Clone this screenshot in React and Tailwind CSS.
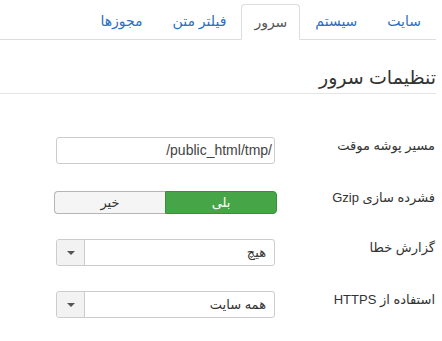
const tabs = [
  { label: "سایت" },
  { label: "سیستم" },
  { label: "سرور", active: true },
  { label: "فیلتر متن" },
  { label: "مجوزها" },
];

function Caret() {
  return (
    <svg width="8" height="4" viewBox="0 0 8 4" className="block">
      <path d="M0 0 H8 L4 4 Z" fill="#555" />
    </svg>
  );
}

function Select({ value }) {
  return (
    <div className="flex h-[27px] w-[219px] rounded-[3px] border border-[#ccc] bg-white">
      <div className="flex flex-1 items-center pr-[8px] text-[13px] text-[#333]">{value}</div>
      <div className="flex w-[28px] items-center justify-center border-r border-[#ccc] bg-[#f2f2f2] rounded-l-[3px]">
        <Caret />
      </div>
    </div>
  );
}

function Row({ label, className, children }) {
  return (
    <div className={`flex items-start ${className}`}>
      <div className="w-[161px] shrink-0 pr-[1px] text-[13px] leading-[18px] text-[#333]">{label}</div>
      <div>{children}</div>
    </div>
  );
}

export default function App() {
  return (
    <div
      dir="rtl"
      className="h-[341px] w-[442px] overflow-hidden bg-white pr-[6px]"
      style={{ fontFamily: '"Liberation Sans", "DejaVu Sans", sans-serif' }}
    >
      {/* تب ها */}
      <ul className="mt-[4px] flex h-[36px] border-b border-[#ddd]">
        {tabs.map((t) => (
          <li
            key={t.label}
            className={
              t.active
                ? "-mb-px flex h-[36px] items-center rounded-t-[4px] border border-b-white border-[#ddd] bg-white px-[12px] text-[14px] text-[#555]"
                : "flex h-[35px] items-center px-[15px] text-[14px] text-[#2a6fbf]"
            }
          >
            {t.label}
          </li>
        ))}
      </ul>

      {/* عنوان */}
      <h3 className="mt-[25px] border-b border-[#e5e5e5] pb-[3px] text-[19px] leading-[25px] text-[#333]">
        تنظیمات سرور
      </h3>

      <Row label="مسیر پوشه موقت" className="mt-[43px]">
        <div className="flex h-[27px] w-[219px] items-center rounded-[3px] border border-[#ccc] bg-white pr-[2px] text-[14px] text-[#444]">
          /public_html/tmp/
        </div>
      </Row>

      <Row label="فشرده سازی Gzip" className="mt-[25px]">
        <div className="mt-[2px] flex h-[23px] w-[223px] -mr-[2px]">
          <div className="flex w-[112px] items-center justify-center rounded-r-[4px] border border-[#3a8f3a] bg-[#46a546] text-[13px] text-white">
            بلی
          </div>
          <div className="flex flex-1 items-center justify-center rounded-l-[4px] border border-r-0 border-[#b5b5b5] bg-[#f5f5f5] text-[13px] text-[#333]">
            خیر
          </div>
        </div>
      </Row>

      <Row label="گزارش خطا" className="mt-[25px]">
        <Select value="هیچ" />
      </Row>

      <Row label="استفاده از HTTPS" className="mt-[25px]">
        <Select value="همه سایت" />
      </Row>
    </div>
  );
}
